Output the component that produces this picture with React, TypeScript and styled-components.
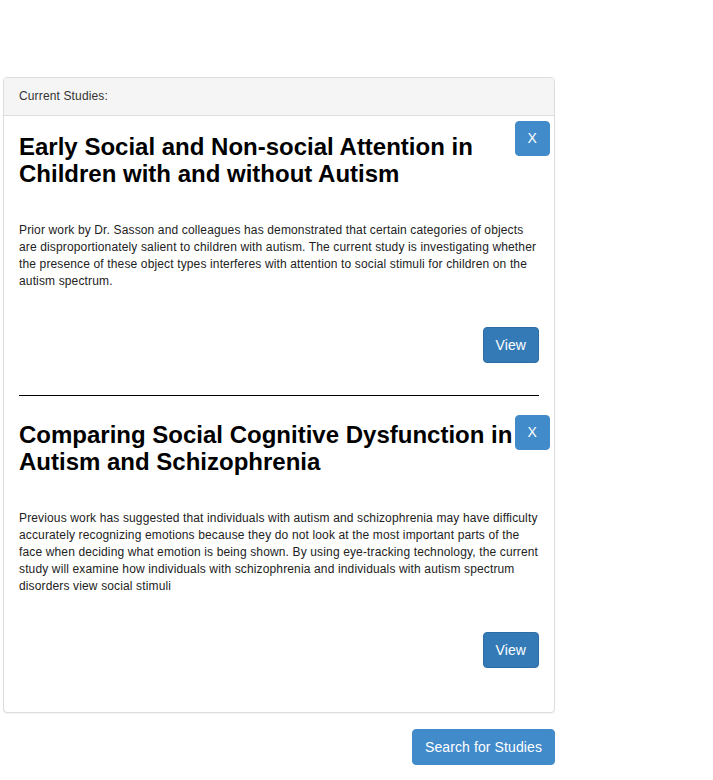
import React from "react";
import styled, { createGlobalStyle } from "styled-components";

const Global = createGlobalStyle`
  html, body { margin: 0; padding: 0; background: #fff; }
  body { font-family: "Liberation Sans", Arial, sans-serif; color: #333; }
  * { box-sizing: border-box; }
`;

const Page = styled.div`
  padding: 77px 0 0 3px;
  width: 555px;
  display: flex;
  flex-direction: column;
`;

const Panel = styled.section`
  width: 552px;
  border: 1px solid #ddd;
  border-radius: 4px;
  background: #fff;
  box-shadow: 0 1px 1px rgba(0, 0, 0, 0.05);
`;

const PanelHeading = styled.div`
  padding: 10px 15px;
  font-size: 12px;
  line-height: 17px;
  letter-spacing: 0.14px;
  color: #333;
  background: #f5f5f5;
  border-bottom: 1px solid #ddd;
  border-radius: 3px 3px 0 0;
`;

const PanelBody = styled.div`
  padding: 5px 15px 44px 15px;
  display: flex;
  flex-direction: column;
`;

const Study = styled.article<{ $top: number }>`
  display: flex;
  flex-direction: column;
  margin-top: ${(p) => p.$top}px;
`;

const StudyHead = styled.div`
  display: flex;
  align-items: flex-start;
  justify-content: space-between;
`;

const Title = styled.h3<{ $offset: number }>`
  flex: 1;
  margin: ${(p) => p.$offset}px 0 0 0;
  font-size: 24px;
  line-height: 27px;
  font-weight: bold;
  color: #000;
`;

const Btn = styled.button<{ $variant: "light" | "dark" }>`
  font-family: "Liberation Sans", Arial, sans-serif;
  font-size: 14px;
  line-height: 20px;
  letter-spacing: 0.1px;
  color: #fff;
  border-radius: 4px;
  cursor: pointer;
  padding: 7px 12px;
  background: ${(p) => (p.$variant === "dark" ? "#337ab7" : "#428bca")};
  border: 1px solid ${(p) => (p.$variant === "dark" ? "#2e6da4" : "#428bca")};
`;

const CloseBtn = styled(Btn)`
  padding: 6px 12px 7px;
  margin-right: -11px;
  flex: none;
`;

const Description = styled.p`
  margin: 35px -3px 0 0;
  font-size: 12px;
  line-height: 17px;
  letter-spacing: 0.14px;
  color: #222;
`;

const Actions = styled.div`
  display: flex;
  justify-content: flex-end;
  margin-top: 37px;
`;

const Divider = styled.hr`
  margin: 32px 0 0 0;
  border: 0;
  border-top: 1px solid #000;
  height: 0;
`;

const Footer = styled.div`
  width: 552px;
  display: flex;
  justify-content: flex-end;
  margin-top: 16px;
`;

const studies = [
  {
    title: "Early Social and Non-social Attention in Children with and without Autism",
    text: "Prior work by Dr. Sasson and colleagues has demonstrated that certain categories of objects are disproportionately salient to children with autism. The current study is investigating whether the presence of these object types interferes with attention to social stimuli for children on the autism spectrum.",
    top: 0,
    offset: 12,
  },
  {
    title: "Comparing Social Cognitive Dysfunction in Autism and Schizophrenia",
    text: "Previous work has suggested that individuals with autism and schizophrenia may have difficulty accurately recognizing emotions because they do not look at the most important parts of the face when deciding what emotion is being shown. By using eye-tracking technology, the current study will examine how individuals with schizophrenia and individuals with autism spectrum disorders view social stimuli",
    top: 19,
    offset: 6,
  },
];

export default function App() {
  return (
    <>
      <Global />
      <Page>
        <Panel>
          <PanelHeading>Current Studies:</PanelHeading>
          <PanelBody>
            {studies.map((s, i) => (
              <React.Fragment key={i}>
                {i > 0 && <Divider />}
                <Study $top={s.top}>
                  <StudyHead>
                    <Title $offset={s.offset}>{s.title}</Title>
                    <CloseBtn $variant="light">X</CloseBtn>
                  </StudyHead>
                  <Description>{s.text}</Description>
                  <Actions>
                    <Btn $variant="dark">View</Btn>
                  </Actions>
                </Study>
              </React.Fragment>
            ))}
          </PanelBody>
        </Panel>
        <Footer>
          <Btn $variant="light">Search for Studies</Btn>
        </Footer>
      </Page>
    </>
  );
}
